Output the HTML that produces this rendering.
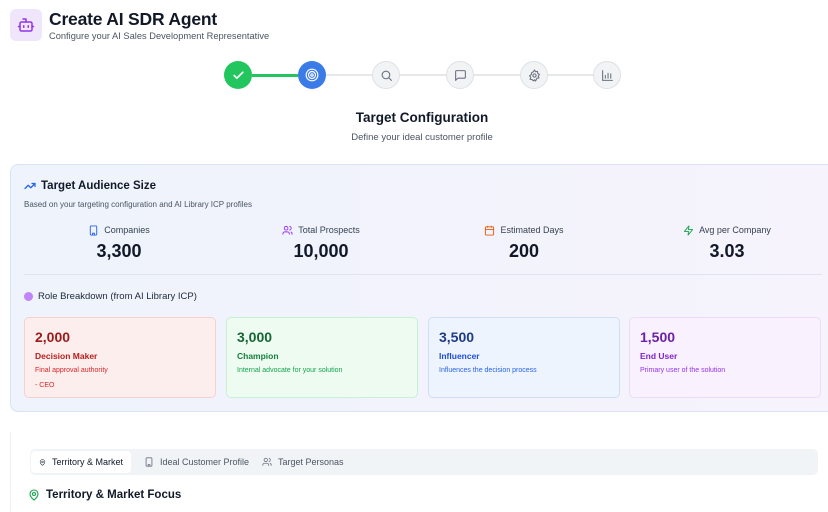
<!DOCTYPE html>
<html><head><meta charset="utf-8"><style>
*{box-sizing:border-box;margin:0;padding:0}
body{width:828px;height:509px;overflow:hidden;background:#fff;font-family:"Liberation Sans",sans-serif;color:#111827;position:relative}
.abs{position:absolute}
.logo{left:10px;top:9px;width:32px;height:32px;border-radius:6px;background:#f0e6fb;display:flex;align-items:center;justify-content:center}
h1{position:absolute;left:49px;top:9px;font-size:17.5px;font-weight:700;letter-spacing:-0.2px}
.sub{left:49px;top:31px;font-size:9.3px;color:#4b5563}
.step{width:28px;height:28px;border-radius:50%;top:61px;display:flex;align-items:center;justify-content:center}
.grey{background:#f1f3f5;border:1.5px solid #dde1e6}
.line{height:2px;top:74px;background:#e5e7eb}
.ctitle{left:0;width:844px;text-align:center;top:110px;font-size:13.5px;font-weight:700}
.csub{left:0;width:844px;text-align:center;top:132px;font-size:9.5px;color:#4b5563}
.card{left:10px;top:164px;width:830px;height:248px;border:1px solid #d8e4f4;border-radius:8px;background:linear-gradient(90deg,#eef3fc,#f6f3fc)}
.stat{width:200px;text-align:center}
.stat .l{font-size:9px;color:#374151;display:flex;align-items:center;justify-content:center;gap:5px;height:12px}
.stat .v{font-size:18px;font-weight:700;margin-top:5px;color:#111827}
.role{top:317px;width:192px;height:81px;border-radius:5px;padding:11px 10px}
.role .n{font-size:14px;font-weight:700}
.role .t{font-size:8.5px;font-weight:700;margin-top:6px}
.role .d{font-size:7px;margin-top:6px}
.tabs{left:30px;top:449px;width:788px;height:26px;background:#f1f4f6;border-radius:5px}
.tab{top:451px;height:22px;font-size:9px;color:#4b5563;display:flex;align-items:center;gap:6px;padding:0 8px;white-space:nowrap}
</style></head><body>
<div class="abs logo"><svg width="18" height="18" viewBox="0 0 24 24" fill="none" stroke="#9333ea" stroke-width="2" stroke-linecap="round" stroke-linejoin="round"><path d="M12 8V4H8"/><rect x="4" y="8" width="16" height="12" rx="2"/><path d="M2 14h2M20 14h2M15 13v2M9 13v2"/></svg></div>
<h1>Create AI SDR Agent</h1>
<div class="abs sub">Configure your AI Sales Development Representative</div>

<div class="abs line" style="left:252px;width:46px;background:#22c55e;height:2.5px"></div>
<div class="abs line" style="left:326px;width:46px"></div>
<div class="abs line" style="left:400px;width:46px"></div>
<div class="abs line" style="left:474px;width:46px"></div>
<div class="abs line" style="left:548px;width:46px"></div>
<div class="abs step" style="left:224px;background:#22c55e"><svg width="13" height="13" viewBox="0 0 24 24" fill="none" stroke="#fff" stroke-width="3" stroke-linecap="round" stroke-linejoin="round"><path d="M20 6 9 17l-5-5"/></svg></div>
<div class="abs step" style="left:298px;background:#3b7be8"><svg width="14" height="14" viewBox="0 0 24 24" fill="none" stroke="#fff" stroke-width="2"><circle cx="12" cy="12" r="10"/><circle cx="12" cy="12" r="6"/><circle cx="12" cy="12" r="2"/></svg></div>
<div class="abs step grey" style="left:372px"><svg width="13" height="13" viewBox="0 0 24 24" fill="none" stroke="#6b7280" stroke-width="2" stroke-linecap="round"><circle cx="11" cy="11" r="7"/><path d="m21 21-4.3-4.3"/></svg></div>
<div class="abs step grey" style="left:446px"><svg width="13" height="13" viewBox="0 0 24 24" fill="none" stroke="#6b7280" stroke-width="2" stroke-linejoin="round"><path d="M21 15a2 2 0 0 1-2 2H7l-4 4V5a2 2 0 0 1 2-2h14a2 2 0 0 1 2 2z"/></svg></div>
<div class="abs step grey" style="left:520px"><svg width="13" height="13" viewBox="0 0 24 24" fill="none" stroke="#6b7280" stroke-width="2"><circle cx="12" cy="12" r="3"/><path d="M12 2l2 3 3.5-.5.5 3.5 3 2-2 3 1 3.5-3.5.5L14 22l-2-2-2 2-2.5-2.5L4 19l1-3.5-2-3 3-2 .5-3.5L10 5z"/></svg></div>
<div class="abs step grey" style="left:593px"><svg width="13" height="13" viewBox="0 0 24 24" fill="none" stroke="#6b7280" stroke-width="2" stroke-linecap="round"><path d="M3 3v18h18M8 17v-5M13 17V8M18 17v-8"/></svg></div>

<div class="abs ctitle">Target Configuration</div>
<div class="abs csub">Define your ideal customer profile</div>

<div class="abs card"></div>
<div class="abs" style="left:24px;top:180px;display:flex;align-items:center;gap:5px"><svg width="12" height="12" viewBox="0 0 24 24" fill="none" stroke="#2563eb" stroke-width="2.5" stroke-linecap="round" stroke-linejoin="round"><path d="m22 7-8.5 8.5-5-5L2 17"/><path d="M16 7h6v6"/></svg><span style="font-size:11.5px;font-weight:700">Target Audience Size</span></div>
<div class="abs" style="left:24px;top:200px;font-size:8px;color:#4b5563">Based on your targeting configuration and AI Library ICP profiles</div>

<div class="abs stat" style="left:19px;top:224px"><div class="l"><svg width="11" height="11" viewBox="0 0 24 24" fill="none" stroke="#2563eb" stroke-width="2"><rect x="5" y="2" width="14" height="20" rx="2"/><path d="M10 22v-4h4v4"/></svg>Companies</div><div class="v">3,300</div></div>
<div class="abs stat" style="left:221px;top:224px"><div class="l"><svg width="11" height="11" viewBox="0 0 24 24" fill="none" stroke="#9333ea" stroke-width="2"><circle cx="9" cy="7" r="4"/><path d="M2 21v-2a4 4 0 0 1 4-4h6a4 4 0 0 1 4 4v2M16 3a4 4 0 0 1 0 8M22 21v-2a4 4 0 0 0-3-3.9"/></svg>Total Prospects</div><div class="v">10,000</div></div>
<div class="abs stat" style="left:424px;top:224px"><div class="l"><svg width="11" height="11" viewBox="0 0 24 24" fill="none" stroke="#ea580c" stroke-width="2"><rect x="3" y="4" width="18" height="18" rx="2"/><path d="M16 2v4M8 2v4M3 10h18"/></svg>Estimated Days</div><div class="v">200</div></div>
<div class="abs stat" style="left:627px;top:224px"><div class="l"><svg width="11" height="11" viewBox="0 0 24 24" fill="none" stroke="#16a34a" stroke-width="2" stroke-linejoin="round"><path d="M13 2 3 14h9l-1 8 10-12h-9z"/></svg>Avg per Company</div><div class="v">3.03</div></div>

<div class="abs" style="left:24px;top:274px;width:798px;height:1px;background:#dfe4ee"></div>
<div class="abs" style="left:24px;top:291px;display:flex;align-items:center;gap:5px"><span style="width:9px;height:9px;border-radius:50%;background:#c084fc;display:inline-block"></span><span style="font-size:9.5px;color:#1f2937">Role Breakdown (from AI Library ICP)</span></div>

<div class="abs role" style="left:24px;background:#fdeeee;border:1px solid #f7d0d0;color:#991b1b"><div class="n">2,000</div><div class="t" style="color:#b91c1c">Decision Maker</div><div class="d" style="color:#dc2626">Final approval authority</div><div class="d" style="color:#dc2626;margin-top:8px">- CEO</div></div>
<div class="abs role" style="left:226px;background:#edfbf1;border:1px solid #c9efd5;color:#166534"><div class="n">3,000</div><div class="t" style="color:#15803d">Champion</div><div class="d" style="color:#16a34a">Internal advocate for your solution</div></div>
<div class="abs role" style="left:428px;background:#eef4fd;border:1px solid #cfe0f6;color:#1e3a8a"><div class="n">3,500</div><div class="t" style="color:#1d4ed8">Influencer</div><div class="d" style="color:#2563eb">Influences the decision process</div></div>
<div class="abs role" style="left:629px;background:#f9f1fd;border:1px solid #ecdcf7;color:#6b21a8"><div class="n">1,500</div><div class="t" style="color:#7e22ce">End User</div><div class="d" style="color:#9333ea">Primary user of the solution</div></div>

<div class="abs" style="left:10px;top:432px;width:1px;height:80px;background:#f0f1f3"></div>
<div class="abs tabs"></div>
<div class="abs tab" style="left:31px;width:100px;background:#fff;border-radius:4px;color:#111827"><svg width="11" height="11" viewBox="0 0 24 24" fill="none" stroke="#374151" stroke-width="2.2"><path d="M20 10c0 6-8 12-8 12S4 16 4 10a8 8 0 0 1 16 0z"/><circle cx="12" cy="10" r="3"/></svg>Territory &amp; Market</div>
<div class="abs tab" style="left:136px"><svg width="10" height="10" viewBox="0 0 24 24" fill="none" stroke="#6b7280" stroke-width="2"><rect x="5" y="2" width="14" height="20" rx="2"/><path d="M10 22v-4h4v4"/></svg>Ideal Customer Profile</div>
<div class="abs tab" style="left:254px"><svg width="10" height="10" viewBox="0 0 24 24" fill="none" stroke="#6b7280" stroke-width="2"><circle cx="9" cy="7" r="4"/><path d="M2 21v-2a4 4 0 0 1 4-4h6a4 4 0 0 1 4 4v2M16 3a4 4 0 0 1 0 8M22 21v-2a4 4 0 0 0-3-3.9"/></svg>Target Personas</div>

<div class="abs" style="left:28px;top:489px;display:flex;align-items:center;gap:6px"><svg width="12" height="12" viewBox="0 0 24 24" fill="none" stroke="#16a34a" stroke-width="2.2"><path d="M20 10c0 6-8 12-8 12S4 16 4 10a8 8 0 0 1 16 0z"/><circle cx="12" cy="10" r="3"/></svg><span style="font-size:11.5px;font-weight:700;color:#111827">Territory &amp; Market Focus</span></div>
</body></html>
